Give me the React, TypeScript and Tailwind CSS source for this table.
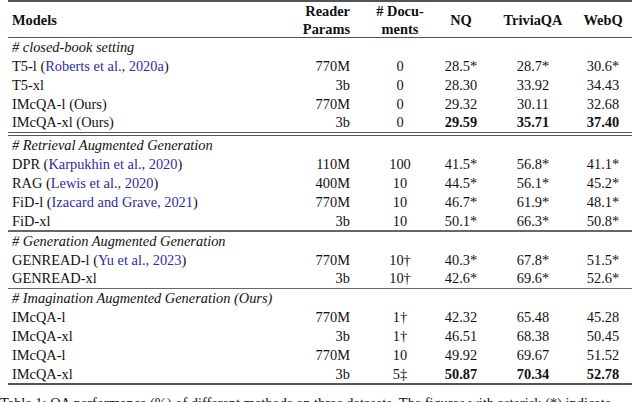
import React from "react";

type Cell = { text: string; bold?: boolean };

interface RowData {
  name: string;
  cite?: string;
  params: string;
  docs: string;
  nq: string;
  tqa: string;
  webq: string;
  bold?: boolean;
}

const cols = "grid grid-cols-[292px_50px_80px_62px_82px_58px]";

const sections: { title: string; rows: RowData[] }[] = [
  {
    title: "# closed-book setting",
    rows: [
      { name: "T5-l", cite: "Roberts et al., 2020a", params: "770M", docs: "0", nq: "28.5*", tqa: "28.7*", webq: "30.6*" },
      { name: "T5-xl", params: "3b", docs: "0", nq: "28.30", tqa: "33.92", webq: "34.43" },
      { name: "IMcQA-l (Ours)", params: "770M", docs: "0", nq: "29.32", tqa: "30.11", webq: "32.68" },
      { name: "IMcQA-xl (Ours)", params: "3b", docs: "0", nq: "29.59", tqa: "35.71", webq: "37.40", bold: true },
    ],
  },
  {
    title: "# Retrieval Augmented Generation",
    rows: [
      { name: "DPR", cite: "Karpukhin et al., 2020", params: "110M", docs: "100", nq: "41.5*", tqa: "56.8*", webq: "41.1*" },
      { name: "RAG", cite: "Lewis et al., 2020", params: "400M", docs: "10", nq: "44.5*", tqa: "56.1*", webq: "45.2*" },
      { name: "FiD-l", cite: "Izacard and Grave, 2021", params: "770M", docs: "10", nq: "46.7*", tqa: "61.9*", webq: "48.1*" },
      { name: "FiD-xl", params: "3b", docs: "10", nq: "50.1*", tqa: "66.3*", webq: "50.8*" },
    ],
  },
  {
    title: "# Generation Augmented Generation",
    rows: [
      { name: "GENREAD-l", cite: "Yu et al., 2023", params: "770M", docs: "10†", nq: "40.3*", tqa: "67.8*", webq: "51.5*" },
      { name: "GENREAD-xl", params: "3b", docs: "10†", nq: "42.6*", tqa: "69.6*", webq: "52.6*" },
    ],
  },
  {
    title: "# Imagination Augmented Generation (Ours)",
    rows: [
      { name: "IMcQA-l", params: "770M", docs: "1†", nq: "42.32", tqa: "65.48", webq: "45.28" },
      { name: "IMcQA-xl", params: "3b", docs: "1†", nq: "46.51", tqa: "68.38", webq: "50.45" },
      { name: "IMcQA-l", params: "770M", docs: "10", nq: "49.92", tqa: "69.67", webq: "51.52" },
      { name: "IMcQA-xl", params: "3b", docs: "5‡", nq: "50.87", tqa: "70.34", webq: "52.78", bold: true },
    ],
  },
];

function Score({ text, bold }: Cell) {
  return <div className={bold ? "text-center font-bold" : "text-center"}>{text}</div>;
}

function Row({ row }: { row: RowData }) {
  return (
    <div className={`${cols} h-[18.75px] items-center leading-[18px] whitespace-nowrap`}>
      <div className="pl-1">
        {row.name}
        {row.cite && (
          <>
            {" ("}
            <span className="text-[#2b2ba6]">{row.cite}</span>
            {")"}
          </>
        )}
      </div>
      <div className="text-right">{row.params}</div>
      <div className="pl-[20px] text-center">{row.docs}</div>
      <Score text={row.nq} bold={row.bold} />
      <Score text={row.tqa} bold={row.bold} />
      <Score text={row.webq} bold={row.bold} />
    </div>
  );
}

export default function App() {
  return (
    <div className="w-[640px] h-[402px] overflow-hidden bg-white text-[#111] font-['Liberation_Serif',serif] text-[14.4px]">
      <div className="ml-2 w-[624px]">
        <div className="h-[2px] bg-[#555]" />
        {/* header */}
        <div className={`${cols} h-[35px] items-center font-bold leading-[18px] whitespace-nowrap`}>
          <div className="pl-1">Models</div>
          <div className="text-right">
            Reader
            <br />
            Params
          </div>
          <div className="pl-[20px] text-center">
            # Docu-
            <br />
            ments
          </div>
          <div className="text-center">NQ</div>
          <div className="text-center">TriviaQA</div>
          <div className="text-center">WebQ</div>
        </div>
        <div className="h-px bg-[#555]" />

        {/* closed-book */}
        <div className="pl-1 h-[18.75px] leading-[18.75px] italic">{sections[0].title}</div>
        {sections[0].rows.map((r, i) => (
          <Row key={i} row={r} />
        ))}
        <div className="h-[0.5px]" />
        <div className="h-px bg-[#555]" />
        <div className="h-[2px]" />
        <div className="h-px bg-[#555]" />

        {sections.slice(1).map((s, si) => (
          <div key={si}>
            <div className="pl-1 h-[18.75px] leading-[18.75px] italic whitespace-nowrap">{s.title}</div>
            {s.rows.map((r, i) => (
              <Row key={i} row={r} />
            ))}
            {si < 2 ? (
              <div className="h-[1.5px] bg-[#666]" />
            ) : (
              <div className="h-[2px] bg-[#555]" />
            )}
          </div>
        ))}
      </div>
      <p className="mt-[9px] leading-[18px] whitespace-nowrap">
        Table 1: QA performance (%) of different methods on three datasets. The figures with asterisk (*) indicate
      </p>
    </div>
  );
}
